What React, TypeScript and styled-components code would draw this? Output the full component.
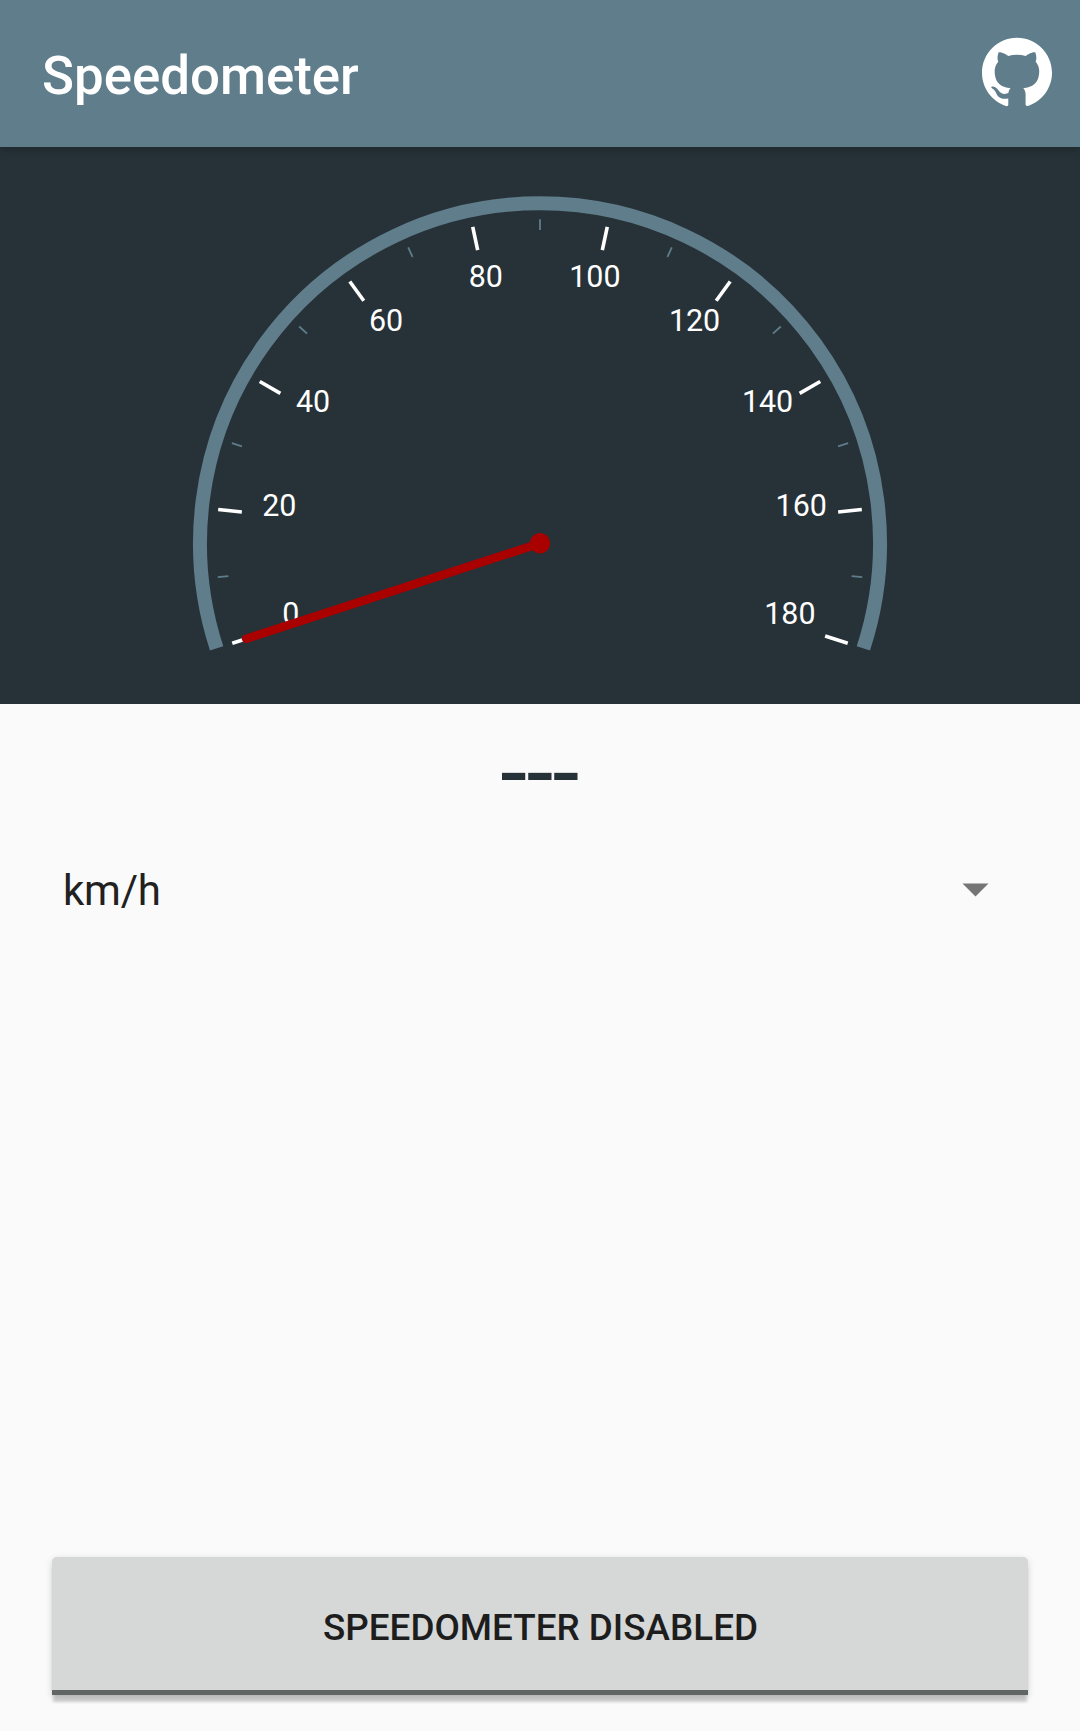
import React from "react";
import styled, { createGlobalStyle } from "styled-components";

const GlobalStyle = createGlobalStyle`
  * { box-sizing: border-box; }
  body { margin: 0; background: #fafafa; font-family: Roboto, "Noto Sans", sans-serif; }
`;

const Screen = styled.div`
  display: flex;
  flex-direction: column;
  width: 1080px;
  height: 1731px;
  background: #fafafa;
  overflow: hidden;
`;

const AppBar = styled.header`
  display: flex;
  align-items: center;
  justify-content: space-between;
  flex: none;
  height: 147px;
  padding: 0 28px 0 42px;
  background: #607d8b;
  box-shadow: 0 2px 10px rgba(0, 0, 0, 0.24);
  z-index: 1;
`;

const Title = styled.h1`
  margin: 0;
  padding-top: 5px;
  color: #fff;
  font-size: 52.8px;
  font-weight: 500;
  line-height: 62px;
`;

const IconLink = styled.button`
  display: flex;
  padding: 0 0 3px;
  border: 0;
  background: none;
  color: #fff;
`;

const GaugePanel = styled.section`
  flex: none;
  height: 557px;
  background: #263238;
  svg { display: block; }
`;

const GaugeLabel = styled.text`
  fill: #fff;
  font-family: Roboto, "Noto Sans", sans-serif;
  font-size: 31.5px;
  text-anchor: middle;
`;

const Reading = styled.div`
  flex: none;
  height: 126px;
  padding-top: 31px;
  color: #263238;
  font-size: 65.6px;
  font-weight: 700;
  line-height: 78px;
  letter-spacing: -5.5px;
  text-indent: -5.5px;
  text-align: center;
  transform: scaleX(1.285);
`;

const UnitPicker = styled.div`
  display: flex;
  align-items: center;
  justify-content: space-between;
  flex: none;
  height: 120px;
  padding: 0 91px 0 63px;
  color: #212121;
  font-size: 42px;
  line-height: 50px;
`;

const UnitName = styled.span`
  padding-top: 2px;
  letter-spacing: -0.2px;
`;

const Footer = styled.footer`
  margin-top: auto;
  padding: 0 52px 36px;
`;

const ToggleButton = styled.button`
  display: block;
  width: 100%;
  height: 138px;
  padding: 7px 0 0 1px;
  border: 0;
  border-bottom: 5px solid #616564;
  border-radius: 5px 5px 0 0;
  background: #d6d8d7;
  box-shadow: 0 8px 3px -1px rgba(0, 0, 0, 0.17), 0 2px 7px rgba(0, 0, 0, 0.16);
  color: #1d1d1d;
  font-family: inherit;
  font-size: 36.85px;
  font-weight: 500;
  text-transform: uppercase;
`;

const CX = 540;
const CY = 543.3 - 147;
const START = 198;
const STEP = 24;
const DIGIT_WIDTH = 17.1;

function polar(r: number, deg: number) {
  const a = (deg * Math.PI) / 180;
  return { x: CX + r * Math.cos(a), y: CY - r * Math.sin(a) };
}

function Tick({ deg, from, to, color, width }: { deg: number; from: number; to: number; color: string; width: number }) {
  const a = polar(from, deg);
  const b = polar(to, deg);
  return <line x1={a.x} y1={a.y} x2={b.x} y2={b.y} stroke={color} strokeWidth={width} />;
}

function Gauge({ max, value }: { max: number; value: number }) {
  const arcStart = polar(340, START);
  const arcEnd = polar(340, -18);
  const marks = Array.from({ length: max / 20 + 1 }, (_, i) => i);
  const tip = polar(309, START - (value / 20) * STEP);
  return (
    <svg width="1080" height="557" viewBox="0 0 1080 557">
      <path
        d={`M${arcStart.x} ${arcStart.y}A340 340 0 1 1 ${arcEnd.x} ${arcEnd.y}`}
        fill="none"
        stroke="#607d8b"
        strokeWidth="14"
      />
      {marks.map((i) => {
        const deg = START - i * STEP;
        const p = polar(262.4, deg);
        const label = String(i * 20);
        return (
          <g key={i}>
            <Tick deg={deg} from={299.8} to={323.6} color="#fff" width={3.6} />
            {i < marks.length - 1 && (
              <Tick deg={deg - STEP / 2} from={313.4} to={324} color="#607d8b" width={1.8} />
            )}
            <GaugeLabel x={p.x + 0.3} y={p.y} textLength={label.length * DIGIT_WIDTH} lengthAdjust="spacingAndGlyphs">
              {label}
            </GaugeLabel>
          </g>
        );
      })}
      <line x1={CX} y1={CY} x2={tip.x} y2={tip.y} stroke="#a90000" strokeWidth="8.6" strokeLinecap="round" />
      <circle cx={CX} cy={CY} r="10.2" fill="#a90000" />
    </svg>
  );
}

function GithubMark() {
  return (
    <svg width="70" height="70" viewBox="0 0 24 24" fill="currentColor">
      <path d="M12 .297c-6.63 0-12 5.373-12 12 0 5.303 3.438 9.8 8.205 11.385.6.113.82-.258.82-.577 0-.285-.01-1.04-.015-2.04-3.338.724-4.042-1.61-4.042-1.61C4.422 18.07 3.633 17.7 3.633 17.7c-1.087-.744.084-.729.084-.729 1.205.084 1.838 1.236 1.838 1.236 1.07 1.835 2.809 1.305 3.495.998.108-.776.417-1.305.76-1.605-2.665-.3-5.466-1.332-5.466-5.93 0-1.31.465-2.38 1.235-3.22-.135-.303-.54-1.523.105-3.176 0 0 1.005-.322 3.3 1.23.96-.267 1.98-.399 3-.405 1.02.006 2.04.138 3 .405 2.28-1.552 3.285-1.23 3.285-1.23.645 1.653.24 2.873.12 3.176.765.84 1.23 1.91 1.23 3.22 0 4.61-2.805 5.625-5.475 5.92.42.36.81 1.096.81 2.22 0 1.606-.015 2.896-.015 3.286 0 .315.21.69.825.57C20.565 22.092 24 17.592 24 12.297c0-6.627-5.373-12-12-12" />
    </svg>
  );
}

export default function App() {
  return (
    <>
      <GlobalStyle />
      <Screen>
        <AppBar>
          <Title>Speedometer</Title>
          <IconLink aria-label="GitHub"><GithubMark /></IconLink>
        </AppBar>
        <GaugePanel>
          <Gauge max={180} value={0} />
        </GaugePanel>
        <Reading>---</Reading>
        <UnitPicker>
          <UnitName>km/h</UnitName>
          <svg width="27" height="14" viewBox="0 0 27 14">
            <path d="M0.5 0.5H26.5L13.5 13.5Z" fill="#757575" />
          </svg>
        </UnitPicker>
        <Footer>
          <ToggleButton>Speedometer disabled</ToggleButton>
        </Footer>
      </Screen>
    </>
  );
}
